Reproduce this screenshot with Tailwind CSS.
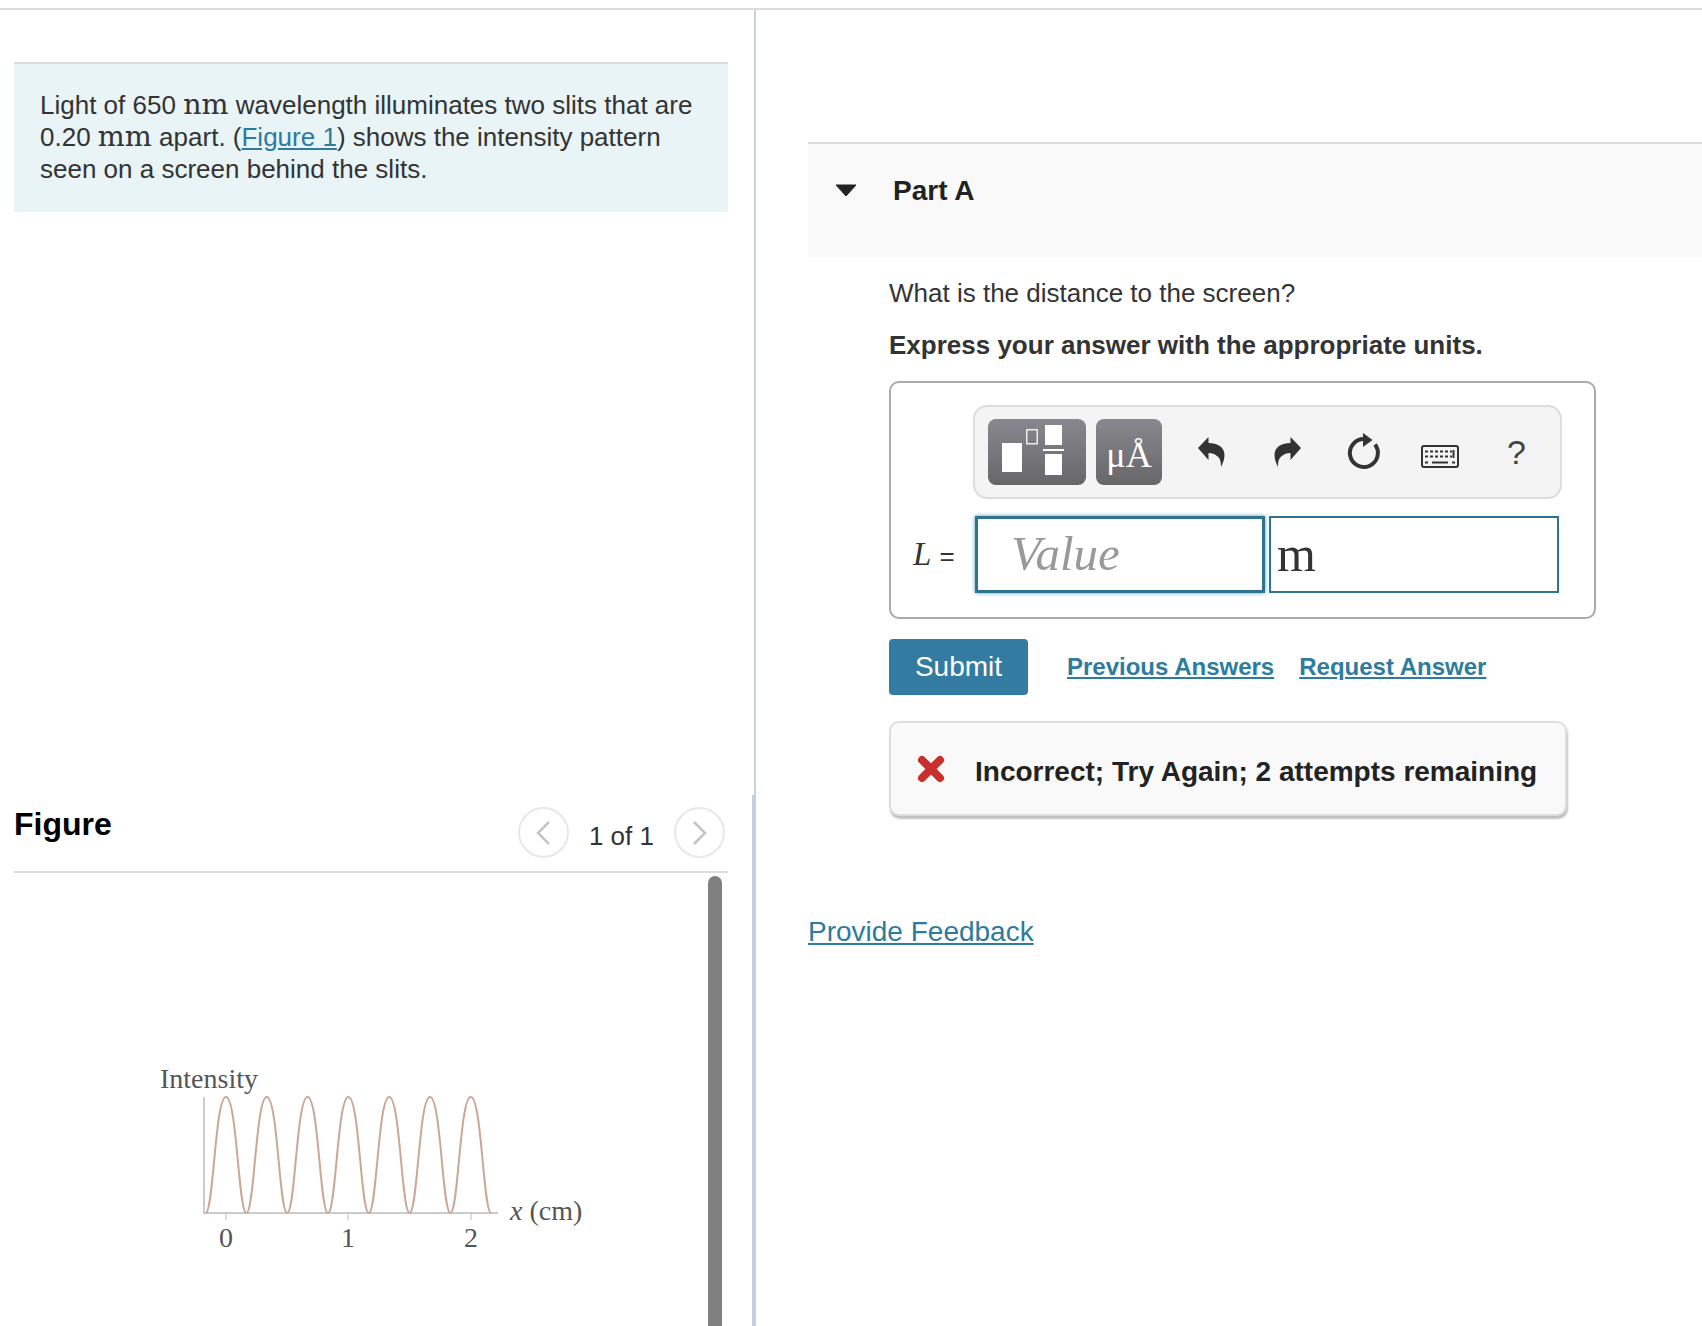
<!DOCTYPE html>
<html lang="en">
<head>
<meta charset="UTF-8">
<script src="https://cdn.jsdelivr.net/npm/@tailwindcss/browser@4"></script>
<title>Part A</title>
</head>
<body class="bg-white text-[#333] text-[26px] font-['Liberation_Sans',Arial,sans-serif] overflow-hidden">
<div class="h-[10px] border-b-2 border-[#ddd]"></div>
<div class="flex h-[1316px]">

	<!-- left: statement + figure -->
	<div class="w-[752px] shrink-0 flex flex-col pl-[14px] pr-[24px]">
		<div class="mt-[52px] h-[150px] border-t-2 border-[#ddd] bg-[#e8f4f6] px-[26px] pt-[25px] leading-[32px]">
			Light of 650 <span class="font-['DejaVu_Serif',serif] text-[28.500px] leading-none">nm</span> wavelength illuminates two slits that are 0.20 <span class="font-['DejaVu_Serif',serif] text-[28.500px] leading-none">mm</span> apart. (<a href="#" class="text-[#2d7c9d] underline">Figure 1</a>) shows the intensity pattern seen on a screen behind the slits.
		</div>
		<div class="mt-[600px] h-[61px] flex items-start border-b-2 border-[#ddd] pr-[3px]">
			<h2 class="text-[32px] font-bold text-black leading-[40px] mr-auto -mt-[8px]">Figure</h2>
			<button class="w-[51px] h-[51px] -mt-[5px] rounded-full border-2 border-[#e8e8e8] flex items-center justify-center">
				<svg width="16" height="26" viewBox="0 0 16 26" fill="none" stroke="#c4c4c4" stroke-width="2.500"><path d="M14 2 3 13l11 11"/></svg>
			</button>
			<span class="mx-[20px] leading-[32px] mt-[8px]">1 of 1</span>
			<button class="w-[51px] h-[51px] -mt-[5px] rounded-full border-2 border-[#e8e8e8] flex items-center justify-center">
				<svg width="16" height="26" viewBox="0 0 16 26" fill="none" stroke="#c4c4c4" stroke-width="2.500"><path d="M2 2l11 11L2 24"/></svg>
			</button>
		</div>
		<div class="relative flex-1 overflow-hidden">
			<div class="absolute top-[3px] bottom-0 right-[6px] w-[14px] bg-[#808080] rounded-t-full"></div>
			<svg class="ml-[126px] mt-[177px]" width="460" height="220" viewBox="140 1050 460 220">
				<path d="M204 1097V1213H498" fill="none" stroke="#bbb" stroke-width="1.500"/>
				<path d="M226 1213v7M348 1213v7M471 1213v7" stroke="#bbb" stroke-width="1"/>
				<path d="M205.600 1213c8 0 9.400-116 20.400-116s12.400 116 20.400 116 9.400-116 20.400-116 12.400 116 20.400 116 9.400-116 20.400-116 12.400 116 20.400 116 9.400-116 20.400-116 12.400 116 20.400 116 9.400-116 20.400-116 12.400 116 20.400 116 9.400-116 20.400-116 12.400 116 20.400 116 9.400-116 20.400-116 12.400 116 20.400 116" fill="none" stroke="#cba896" stroke-width="2"/>
				<g font-family="'Liberation Serif',serif" font-size="28" fill="#555">
					<text x="160" y="1088">Intensity</text>
					<text x="510" y="1220"><tspan font-style="italic">x</tspan> (cm)</text>
					<text x="226" y="1247" text-anchor="middle">0</text>
					<text x="348" y="1247" text-anchor="middle">1</text>
					<text x="471" y="1247" text-anchor="middle">2</text>
				</g>
			</svg>
		</div>
	</div>

	<!-- divider, gets thicker where the figure pane starts -->
	<div class="w-[4px] shrink-0 flex flex-col items-end">
		<div class="w-[2px] h-[785px] bg-[#ccd3d8]"></div>
		<div class="w-[4px] flex-1 bg-[#c3d0e0]"></div>
	</div>

	<!-- right: part A -->
	<div class="flex-1 min-w-0 pl-[52px]">
		<div class="mt-[132px] h-[115px] border-t-2 border-[#ddd] bg-[#f9f9f9] flex items-start pl-[27px] pt-[30px]">
			<svg class="mt-[10px]" width="22" height="13" viewBox="0 0 22 13"><path d="M1 1h20L11 12z" fill="#222" stroke="#222" stroke-linejoin="round"/></svg>
			<span class="ml-[36px] text-[28px] font-bold text-[#222] leading-[34px]">Part A</span>
		</div>
		<div class="pl-[81px]">
			<p class="mt-[20px] leading-[32px]">What is the distance to the screen?</p>
			<p class="mt-[20px] leading-[32px] font-bold">Express your answer with the appropriate units.</p>

			<div class="mt-[20px] w-[707px] h-[238px] border-2 border-[#aaa] rounded-[10px] pl-[82px] pt-[22px]">
				<div class="w-[589px] h-[94px] border-2 border-[#ddd] rounded-[14px] bg-[#f4f4f4] flex items-center pl-[13px]">
					<div class="w-[98px] h-[66px] rounded-[8px] bg-linear-to-b from-[#88888e] to-[#67676a]">
						<svg width="98" height="66" viewBox="0 0 98 66">
							<rect x="14" y="24" width="20" height="29" fill="#fff"/>
							<rect x="38.750" y="10.750" width="10.500" height="14" fill="none" stroke="#eee" stroke-width="1.500"/>
							<rect x="57" y="6" width="17" height="20" fill="#fff"/>
							<rect x="55" y="30" width="21" height="2" fill="#fff"/>
							<rect x="57" y="35" width="17" height="21" fill="#fff"/>
						</svg>
					</div>
					<div class="ml-[10px] w-[66px] h-[66px] rounded-[8px] bg-linear-to-b from-[#88888e] to-[#67676a] flex items-center justify-center text-white font-['Liberation_Serif',serif] text-[36px] pt-[6px]">μÅ</div>
					<svg class="ml-[35px]" width="28" height="32" viewBox="0 0 28 32"><path d="M1 12 11.500 1v6c9 0 16 4 16 12 0 5-2 9-3.500 12 0-6-1-9-4-11-2-2-5-3-8.500-3v7z" fill="#333"/></svg>
					<svg class="ml-[49px]" width="28" height="32" viewBox="0 0 28 32"><path d="M27 12 16.500 1v6c-9 0-16 4-16 12 0 5 2 9 3.500 12 0-6 1-9 4-11 2-2 5-3 8.500-3v7z" fill="#333"/></svg>
					<svg class="ml-[44px]" width="36" height="40" viewBox="0 0 36 40"><path d="M18 7a14 14 0 1 0 11 5.500" fill="none" stroke="#333" stroke-width="4"/><path d="M17 1l9.500 7-9.500 7z" fill="#333"/></svg>
					<svg class="ml-[39px] mt-[8px]" width="38" height="23" viewBox="0 0 38 23"><rect x="1" y="1" width="36" height="21" rx="2" fill="#f4f4f4" stroke="#333" stroke-width="2"/><path d="M4 6.500h27M4 11.500h27" stroke="#333" stroke-width="2" stroke-dasharray="3 2"/><path d="M32.500 5v8M4 17.500h3M11 17.500h16M31 17.500h3" stroke="#333" stroke-width="2"/></svg>
					<span class="ml-[48px] text-[34px] text-[#444] leading-none">?</span>
				</div>
				<div class="-ml-[60px] mt-[17px] flex items-center">
					<span class="w-[59px] font-['Liberation_Serif',serif] text-[33px] leading-none whitespace-nowrap"><i>L</i> <span class="font-['Liberation_Sans',sans-serif] text-[26px]">=</span></span>
					<div class="ml-[3px] w-[290px] h-[77px] border-[3px] border-[#2f7391] shadow-[0_0_4px_#4a9cc0] pl-[33px] font-['Liberation_Serif',serif] italic text-[49px] text-[#999] leading-[70px]">Value</div>
					<div class="ml-[4px] w-[290px] h-[77px] border-2 border-[#2f7391] pl-[6px] font-['Liberation_Serif',serif] text-[50px] text-[#333] leading-[72px]">m</div>
				</div>
			</div>

			<div class="mt-[20px] flex items-center">
				<button class="w-[139px] h-[56px] rounded-[4px] bg-[#337ba0] text-white text-[28px]">Submit</button>
				<a href="#" class="ml-[39px] text-[24px] font-bold text-[#2d7c9d] underline">Previous Answers</a>
				<a href="#" class="ml-[25px] text-[24px] font-bold text-[#2d7c9d] underline">Request Answer</a>
			</div>

			<div class="mt-[26px] w-[678px] h-[95px] border-2 border-[#ddd] rounded-[10px] bg-[#f9f9f9] shadow-[1px_3px_2px_#c0c0c0] flex items-center pl-[26px]">
				<svg width="28" height="28" viewBox="0 0 28 28"><path d="M5 5 23 23M23 5 5 23" fill="none" stroke="#c9302c" stroke-width="8" stroke-linecap="round"/></svg>
				<span class="ml-[30px] mt-[6px] font-bold text-[#222] text-[28px] whitespace-nowrap">Incorrect; Try Again; 2 attempts remaining</span>
			</div>
		</div>
		<a href="#" class="block mt-[99px] text-[28px] leading-[34px] text-[#2d7c9d] underline">Provide Feedback</a>
	</div>
</div>
</body>
</html>
